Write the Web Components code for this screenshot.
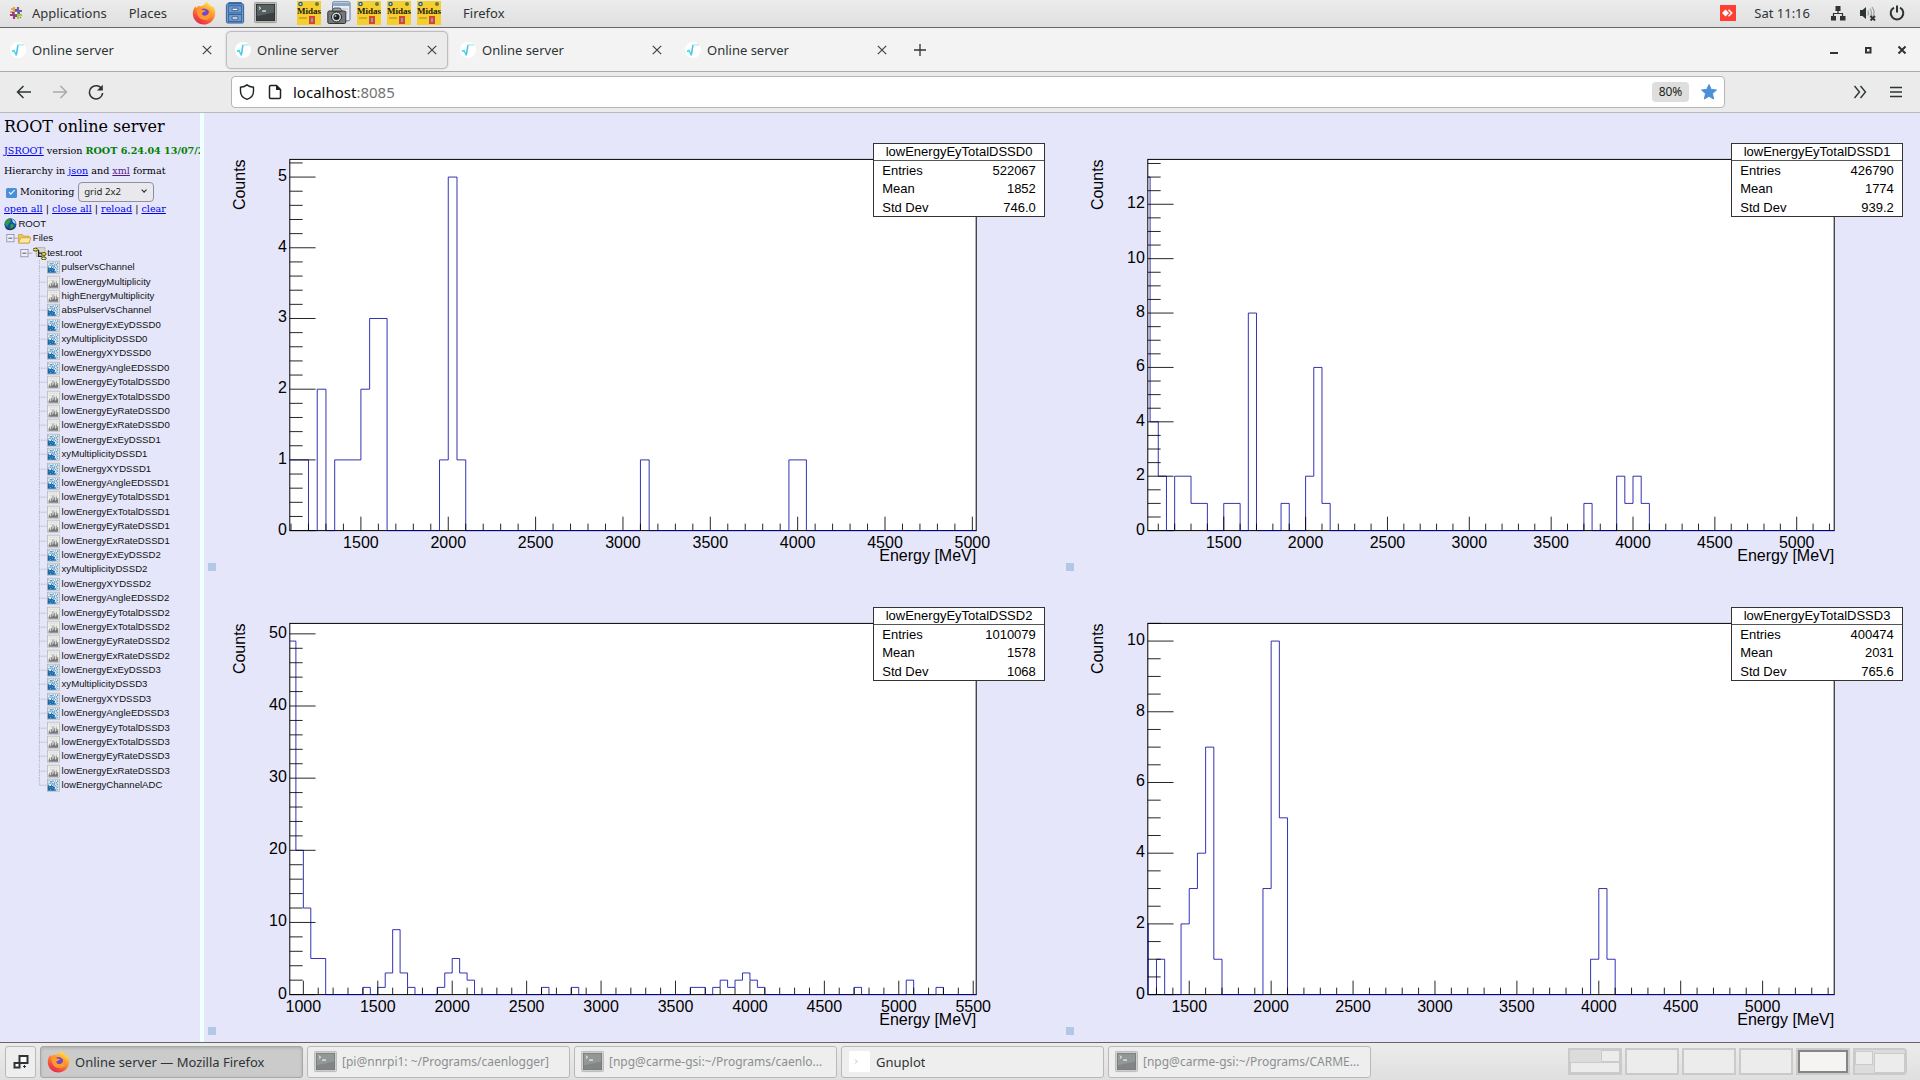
<!DOCTYPE html>
<html lang="en">
<head>
<meta charset="utf-8">
<title>Online server</title>
<style>
html,body{margin:0;height:100%}
body{font-family:"Noto Sans","Open Sans",sans-serif;font-size:13px;color:#2e3436;overflow:hidden}
</style>
</head>
<body>
<desk-top></desk-top>
<script>
const ICONS={
apps:['0 0 14 14','<g stroke-width="2.2" fill="none"><path d="M5 1v5H1" stroke="#e8a33d"/><path d="M9 1v4h4" stroke="#7b5aa6" /><path d="M13 9H9v4" stroke="#9ccd3a"/><path d="M1 9h4v4" stroke="#a8327f"/></g><path d="M7 3v8M3 7h8" stroke="#4b3480" stroke-width="1.6"/><circle cx="7" cy="7" r="1.3" fill="#fff"/><path d="M2.5 3.5 3.5 2.5M11 12l1-1" stroke="#e8542d" stroke-width="1.4"/>'],
firefox:['0 0 24 24','<defs><linearGradient id="f" x1="0.8" y1="0.1" x2="0.3" y2="1"><stop offset="0" stop-color="#ffe14a"/><stop offset=".45" stop-color="#ff8a2b"/><stop offset="1" stop-color="#e8234f"/></linearGradient></defs><path d="M14.5.6c1 2.100 3.900 3.200 5.400 5.400.8 0 .9-.8 1.100-1.100 2 2.700 2.700 6 2 9.300C22 19.700 17.500 23.500 12 23.500 5.800 23.500.8 18.600.8 12.500.8 9.600 2 7 3.400 5.300c.2.800.4 1.400.8 1.800C5.500 5 7.300 4.600 8.800 5.300 11.500 5.300 13 3 14.500.6z" fill="url(#f)"/><circle cx="12" cy="13" r="5.600" fill="#7148c8"/><path d="M4.500 8.500c2.200-1.400 4.600-1 6 .4 1.200.4 2.500.2 3.500.6-1 1.600-3.600 1.500-4.200 3 .3 2 2.600 2.700 4.600 1.800 3-1.300 3-4.600 1.400-6.600 4 1.500 4.700 6.500 1.800 9.500-3 3-8.800 2.300-11-1.200-1.400-2.300-1.900-5-2.100-7.500z" fill="#ff9a2e"/><path d="M4.300 12c.6 5 5.200 7.700 9.500 6.500-4.700 3.300-10.200-.2-9.500-6.500z" fill="#f4375b"/>'],
cabinet:['0 0 20 24','<path d="M2 3 3.500 1h13L18 3v19H2z" fill="#3f70ad"/><rect x="1" y="3" width="18" height="20" rx="1.500" fill="#7fa9d8" stroke="#2f5c96"/><rect x="3" y="5" width="14" height="7.500" fill="#6c9bd0" stroke="#2f5c96"/><rect x="3" y="14" width="14" height="7.500" fill="#6c9bd0" stroke="#2f5c96"/><path d="M7 7.500h6v2.500H7zM7 16.500h6V19H7z" fill="#f4f6fa" stroke="#274b7a" stroke-width=".8"/>'],
term:['0 0 24 24','<rect x=".5" y="1.500" width="23" height="21" rx="1" fill="#c9cbc8" stroke="#9a9c99"/><rect x="2.500" y="3.500" width="19" height="17" fill="#3a4140" stroke="#262b2a"/><path d="M3 4h18v8L3 16z" fill="#566060"/><path d="m5 6 2 1.500L5 9" stroke="#fff" fill="none"/><path d="M8.500 10.500h4" stroke="#fff" stroke-width="1.200"/>'],
camera:['0 0 24 24','<rect x="5.500" y=".8" width="17.500" height="19" rx="1.500" fill="#e9eef4" stroke="#5d7896"/><path d="M5.500 2h17.500v3H5.500z" fill="#8ea9c6"/><path d="M14 8h7M14 11h7" stroke="#b7c4d1"/><rect x=".8" y="10" width="18" height="12.500" rx="1.500" fill="#76797a" stroke="#333"/><path d="M5 10l2-3h6l2 3z" fill="#9da0a1" stroke="#333" stroke-width=".8"/><circle cx="9.500" cy="16" r="5" fill="#d5d7d8" stroke="#222"/><circle cx="9.500" cy="16" r="3" fill="#1b1f24"/><circle cx="8.500" cy="15" r="1" fill="#9bb"/>'],
anydesk:['0 0 16 16','<rect width="16" height="16" fill="#ff3f34"/><path d="M5.500 4.500 9 8l-3.500 3.500L2 8z" fill="#fff"/><path d="m8 5.300 1-1L12.800 8 9 11.700l-1-1L10.700 8z" fill="#fff"/>'],
net:['0 0 16 16','<path d="M5.500 1h5v5h-5zM1 11h5v4.500H1zM10 11h5.500v4.500H10z" fill="#2e3436"/><path d="M8 6v2.500M3.500 11V8.500h9V11" fill="none" stroke="#2e3436" stroke-width="1.200"/>'],
vol:['0 0 17 16','<path d="M1 5h2.500L7 2v12l-3.500-3H1z" fill="#2e3436"/><path d="M8.800 5.500q1.500 2.500 0 5M11 3.500q3 4.500 0 9M13 2q3.500 5 1 9" fill="none" stroke="#a0a3a4" stroke-width="1.300"/><path d="m11.500 11 4.500 4.500M16 11l-4.500 4.500" stroke="#2e3436" stroke-width="1.900"/>'],
power:['0 0 16 16','<path d="M5 2.600a6.300 6.300 0 1 0 6 0" fill="none" stroke="#2e3436" stroke-width="2"/><path d="M8 .5v7" stroke="#2e3436" stroke-width="2"/>'],
fav:['0 0 16 16','<circle cx="8" cy="8" r="8" fill="#fff"/><path d="M2 9.500 4 8.500l2 4" fill="none" stroke="#35dcea" stroke-width="1.500"/><path d="M6 13.500C7.500 10 7 5 8.200 2.800" fill="none" stroke="#4fc4e6" stroke-width="1.600"/><path d="M8 2.900h6" stroke="#a4eaf3" stroke-width="1.200"/>'],
x:['0 0 10 10','<path d="m1.500 1.500 7 7m0-7-7 7" stroke="#3d4345" stroke-width="1"/>'],
plus:['0 0 14 14','<path d="M7 1v12M1 7h12" stroke="#2e3436" stroke-width="1.300"/>'],
min:['0 0 10 10','<path d="M1 8h8" stroke="#2e3436" stroke-width="2"/>'],
max:['0 0 10 10','<rect x="3" y="3" width="4.500" height="4.500" fill="none" stroke="#2e3436" stroke-width="2"/>'],
close:['0 0 10 10','<path d="m1.500 1.500 7 7m0-7-7 7" stroke="#2e3436" stroke-width="2"/>'],
back:['0 0 16 16','<path d="M15 8H1.500M7.500 2l-6 6 6 6" fill="none" stroke="#2e3436" stroke-width="1.500"/>'],
fwd:['0 0 16 16','<path d="M1 8h13.500M8.500 2l6 6-6 6" fill="none" stroke="#a9abab" stroke-width="1.500"/>'],
reload:['0 0 16 16','<path d="M14 5.500A6.600 6.600 0 1 0 14.600 9" fill="none" stroke="#2e3436" stroke-width="1.500"/><path d="M14.800.8v5.700H9z" fill="#2e3436"/>'],
shield:['0 0 16 16','<path d="M8 .9C6.500 2.200 4 3 1.500 3.200v4C1.500 11 4 14 8 15.300c4-1.300 6.500-4.300 6.500-8.100v-4C12 3 9.500 2.200 8 .9z" fill="none" stroke="#1f2324" stroke-width="1.400"/>'],
page:['0 0 16 16','<path d="M9.500 1.500H3.700q-1.200 0-1.200 1.200v10.600q0 1.200 1.200 1.200h8.600q1.200 0 1.200-1.200V5.500z" fill="none" stroke="#1f2324" stroke-width="1.500"/><path d="M9 1v5h5.200z" fill="#1f2324"/>'],
star:['0 0 16 16','<path d="m8 .5 2.200 4.900 5.300.6-4 3.600 1.100 5.400L8 12.300 3.400 15l1.100-5.400-4-3.600 5.300-.6z" fill="#4a90d9" stroke="#4a90d9" stroke-linejoin="round"/>'],
more:['0 0 14 14','<path d="m1.500 1 5 6-5 6M7.500 1l5 6-5 6" fill="none" stroke="#2e3436" stroke-width="1.400"/>'],
menu:['0 0 14 14','<path d="M1 2.500h12M1 7h12M1 11.500h12" stroke="#2e3436" stroke-width="1.300"/>'],
desk:['0 0 16 16','<rect x="6.500" y="2" width="8" height="7" fill="#fff" stroke="#2e3436" stroke-width="2"/><rect x="1.500" y="9" width="5" height="4.500" fill="#fff" stroke="#2e3436" stroke-width="2"/><path d="M10 12.500h3M11.500 11v3" stroke="#2e3436"/>'],
gnuplot:['0 0 24 24','<rect x="1" y="1" width="22" height="22" rx="2" fill="#fff"/><path d="m7 10 3 2-3 2" stroke="#ccc" fill="none"/>'],
globe:['1 0 18 18','<circle cx="9" cy="9" r="7.500" fill="#1c4fa0"/><path d="M2 7C3.500 3 6.500 1.500 9.500 1.500c-1 3 1 3-1 5.500-2 1-2 4-3.500 4.500S2.500 9 2 7zM9.500 9c2-1 4 0 4 2s-2 3.500-3 4.500C8.500 14 8.500 11 9.500 9z" fill="#2f9c4c"/><path d="M11 2.500c3 1 4.500 3.500 4.800 5.500-2 1-4.300-1-4.800-5.500z" fill="#9be0f5"/><path d="M3 14q5 4 11-1" stroke="#123" fill="none"/>'],
folder:['1 0 18 18','<path d="M1.500 15V4.500h5l1.500 2h7V15z" fill="#f2c94f" stroke="#c79a3a"/><path d="M1.500 15 4.500 8.500h12.500L15 15z" fill="#ffe9a0" stroke="#c79a3a"/>'],
rootfile:['1 0 18 18','<path d="M5 2h11v11H5z" fill="#d8d8c8" stroke="#aaa"/><path d="M4 4v2M8 5v8h4M8 9h4" stroke="#222" stroke-width="1.500" fill="none"/><g fill="#f4ec2a" stroke="#222"><ellipse cx="4" cy="4.500" rx="3" ry="1.800"/><ellipse cx="14.500" cy="10" rx="3" ry="1.800"/><ellipse cx="14.500" cy="15.500" rx="3" ry="1.800"/></g>'],
h1:['1 0 18 18','<rect x="1.500" y="1.500" width="15" height="15" fill="#f0f0ee" stroke="#b9b9b9"/><path d="M3 4h12M3 7h12M6 3v8M10 3v8M13 3v8" stroke="#dcdcda"/><path d="M3 16v-3h1v-2h1v3h1v-4h1v3h1v-6h1v5h1v-3h1v4h1v-5h1v4h1v-2h1v6z" fill="#777"/>'],
h2:['1 0 18 18','<rect x="1.500" y="1.500" width="15" height="15" fill="#e2ecf2" stroke="#b0b3b5"/><path d="M2 9h2v1h2V8h1v2h2v1h2v2h-1v1h2v2H2z" fill="#1769aa"/><path d="M3 3h1v1H3zM5 4h2v1H5zM8 3h1v2H8zM11 3h1v1h-1zM14 3h1v2h-1zM4 6h2v1H4zM7 6h1v2H7zM9 7h2v1H9zM12 5h1v2h-1zM13 8h2v1h-2zM11 9h1v1h-1zM13 11h2v1h-2zM14 14h1v1h-1zM12 13h1v1h-1zM9 9h1v1H9zM2 7h1v1H2z" fill="#1769aa"/><path d="M4 11h1v1H4zM7 12h1v1H7zM5 14h1v1H5z" fill="#b9d8ea"/><path d="M6 5h1v1H6zM10 5h1v2h-1zM14 6h1v1h-1zM12 10h1v1h-1zM12 15h1v1h-1zM8 8h1v1H8z" fill="#5fa5d4"/>'],
minus:['0 0 18 18','<path d="M12 9h6" stroke="#9a9aa8"/><rect x="3.500" y="4.500" width="9" height="9" fill="#eef" stroke="#8a8a98"/><path d="M5.500 9h5" stroke="#333"/>'],
mid:['0 0 18 18','<path d="M8 0v18M8 9H18" fill="none" stroke="#9a9aa8" stroke-dasharray="1 1"/>'],
end:['0 0 18 18','<path d="M8 0v9H18" fill="none" stroke="#9a9aa8" stroke-dasharray="1 1"/>'],
blank:['0 0 18 18','']
};
function define(name,html,setup){
  customElements.define(name,class extends HTMLElement{
    connectedCallback(){
      if(this.shadowRoot)return;
      const root=this.attachShadow({mode:'open'});
      root.innerHTML=typeof html==='function'?html(this):html;
      if(setup)setup(this,root);
    }
  });
}
define('sym-icon',el=>{
  const [vb,body]=ICONS[el.getAttribute('name')];
  const w=el.getAttribute('w')||16,h=el.getAttribute('h')||w;
  return `<style>:host{display:block;flex:none}svg{display:block}</style><svg width="${w}" height="${h}" viewBox="${vb}" aria-hidden="true">${body}</svg>`;
});
define('midas-icon',`<style>
:host{display:flex;flex-direction:column;align-items:center;justify-content:space-between;width:24px;height:24px;background:#f5cf2f;box-sizing:border-box;font:bold 9px/8px "Liberation Serif",serif;color:#1d1a10;flex:none;overflow:hidden}
svg{display:block}</style>
<svg width="24" height="6" viewBox="0 0 24 6"><circle cx="3.500" cy="3" r="2.300" fill="#2c5a78"/><circle cx="3.500" cy="3" r="1" fill="#cde"/><circle cx="20" cy="3" r="2" fill="#6d7a3c"/></svg>
<span>Midas</span>
<svg width="24" height="10" viewBox="0 0 24 10"><path d="M2 3h8" stroke="#a08a20" /><rect x="12" y="1" width="6" height="8" fill="#d8452c"/><path d="M14 3h2v4h-2z" fill="#8a9bd0"/></svg>`);

define('top-panel',`<style>
:host{display:flex;align-items:center;height:27px;box-sizing:content-box;background:linear-gradient(#ececec,#dfdfdf);border-bottom:1px solid #666;line-height:20px}
div{display:flex;align-items:center}
.left{flex:1;padding:0 0 2px 9px}
.menu{gap:22px;margin-right:25px}
.apps{gap:9px}
.launch{gap:9px;margin-right:20px}
.midas{gap:6px;margin-right:22px}
.right{gap:13px;padding:0 15px 2px 0}
button{all:unset;display:block}
.clock{margin:0 7px 0 5px}
</style>
<div class="left">
<div class="menu"><div class="apps"><sym-icon name="apps" w="14"></sym-icon><button>Applications</button></div><button>Places</button></div>
<div class="launch"><sym-icon name="firefox" w="24"></sym-icon><sym-icon name="cabinet" w="20" h="23"></sym-icon><sym-icon name="term" w="23"></sym-icon></div>
<div class="midas"><midas-icon></midas-icon><sym-icon name="camera" w="24"></sym-icon><midas-icon></midas-icon><midas-icon></midas-icon><midas-icon></midas-icon></div>
<button>Firefox</button>
</div>
<div class="right"><sym-icon name="anydesk"></sym-icon><span class="clock">Sat 11:16</span><sym-icon name="net"></sym-icon><sym-icon name="vol" w="17" h="16"></sym-icon><sym-icon name="power"></sym-icon></div>`);

define('browser-tab',`<style>
:host{display:flex;align-items:center;gap:6px;width:222px;height:38px;box-sizing:border-box;padding:0 9px 0 8px;border:1px solid transparent;border-radius:5px}
:host([active]){background:#ebebeb;border-color:#bcbcc4;box-shadow:0 0 2px #c0c0cc}
span{flex:1}
button{all:unset}
</style><sym-icon name="fav"></sym-icon><span><slot></slot></span><button aria-label="Close tab"><sym-icon name="x" w="12"></sym-icon></button>`);
define('tab-strip',`<style>
:host{display:flex;align-items:center;gap:3px;height:43px;background:#f3f3f3;border-bottom:1px solid #aaa;padding:0 13px 0 1px}
button{all:unset}
.new{flex:1;display:flex;padding-left:12px}
.win{display:flex;gap:24px}
</style>
<browser-tab>Online server</browser-tab><browser-tab active>Online server</browser-tab><browser-tab>Online server</browser-tab><browser-tab>Online server</browser-tab>
<div class="new"><button aria-label="New tab"><sym-icon name="plus" w="14"></sym-icon></button></div>
<div class="win"><button aria-label="Minimize"><sym-icon name="min" w="10"></sym-icon></button><button aria-label="Restore"><sym-icon name="max" w="10"></sym-icon></button><button aria-label="Close"><sym-icon name="close" w="10"></sym-icon></button></div>`);
define('nav-bar',`<style>
:host{display:flex;align-items:center;height:40px;background:#ebebeb;border-bottom:1px solid #b9b9b9;padding:0 17px 0 16px}
.nav,.end{display:flex;gap:20px}
.nav{width:215px}
.end{gap:22px;margin-left:auto;align-items:center}
button{all:unset}
.url{flex:1;max-width:1494px;margin-right:20px;display:flex;align-items:center;gap:12px;box-sizing:border-box;height:32px;padding:0 7px;background:#fff;border:1px solid #b5b5b5;border-radius:4px}
.addr{flex:1;font-size:15px;line-height:20px;margin-left:-2px;color:#737373}
.addr b{font-weight:400;color:#0c0c0d}
.zoom{background:#dedede;border-radius:4px;font-size:12px;line-height:20px;width:37px;text-align:center;color:#1c1f20}
</style>
<div class="nav"><button aria-label="Back"><sym-icon name="back"></sym-icon></button><button aria-label="Forward"><sym-icon name="fwd"></sym-icon></button><button aria-label="Reload"><sym-icon name="reload"></sym-icon></button></div>
<div class="url"><sym-icon name="shield"></sym-icon><sym-icon name="page"></sym-icon><div class="addr"><b>localhost</b>:8085</div><button class="zoom">80%</button><sym-icon name="star"></sym-icon></div>
<div class="end"><button aria-label="More tools"><sym-icon name="more" w="14"></sym-icon></button><button aria-label="Menu"><sym-icon name="menu" w="14"></sym-icon></button></div>`);

/* One row of the object hierarchy: guide cells, an icon, then a label. */
define('tree-row',el=>`<style>
:host{display:flex;height:18px;line-height:18px;font-size:12px;font-family:"Liberation Sans",sans-serif;color:#111;white-space:nowrap}
</style>${(el.getAttribute('cells')||'').split(' ').filter(Boolean).map(c=>`<sym-icon name="${c}" w="18"></sym-icon>`).join('')}<sym-icon name="${el.getAttribute('icon')}" w="18"></sym-icon><span><slot></slot></span>`);

const items=[['h2','pulserVsChannel'],['h1','lowEnergyMultiplicity'],['h1','highEnergyMultiplicity'],['h2','absPulserVsChannel']];
for(let i=0;i<4;i++){
  for(const n of ['lowEnergyExEy','xyMultiplicity','lowEnergyXY','lowEnergyAngleE'])items.push(['h2',n+'DSSD'+i]);
  for(const n of ['lowEnergyEyTotal','lowEnergyExTotal','lowEnergyEyRate','lowEnergyExRate'])items.push(['h1',n+'DSSD'+i]);
}
items.push(['h2','lowEnergyChannelADC']);

define('root-browser',`<style>
:host{display:block;zoom:.8;width:250px;flex:none;overflow:hidden;background:#e6e6fa;border-right:5px solid #f0ffff;font-family:"DejaVu Serif",serif;font-size:12px;color:#000;white-space:nowrap}
section{padding:2px 0 0 5px}
h1{margin:0;font-size:20px;line-height:30px;font-weight:400}
p{margin:5px 0 0;line-height:20px}
a{color:#0000ee}a.seen{color:#551a8b}
b{color:#008000}
form{display:flex;align-items:center;margin-top:4px;height:25px}
input{appearance:none;width:13px;height:13px;margin:3px 4px 0 3px;border-radius:2px;background:#4a90d9;display:grid;place-items:center}
input::after{content:"";width:6px;height:3px;border:solid #fff;border-width:0 0 2px 2px;rotate:-45deg;margin-bottom:2px}
label{width:73px}
.pick{display:flex;position:relative}
select{appearance:none;width:94px;height:25px;padding:0 6px;border:1px solid #8f8f9d;border-radius:5px;background:#e9e9ed;font:12px "Noto Sans",sans-serif;color:#1c1f20}
.pick::after{content:"";position:absolute;right:9px;top:8px;width:4px;height:4px;border:solid #222;border-width:0 2px 2px 0;rotate:45deg;pointer-events:none}
.ops{margin-top:1px;line-height:16px}
nav{margin-top:2px}
</style>
<section>
<h1>ROOT online server</h1>
<p><a href="#js">JSROOT</a> version <b>ROOT 6.24.04 13/07/2021</b></p>
<p>Hierarchy in <a href="#json">json</a> and <a href="#xml" class="seen">xml</a> format</p>
<form><input type="checkbox" id="mon" checked><label for="mon">Monitoring</label><div class="pick"><select aria-label="Layout"><option>grid 2x2</option></select></div></form>
<p class="ops"><a href="#open">open all</a> | <a href="#close">close all</a> | <a href="#reload">reload</a> | <a href="#clear">clear</a></p>
<nav>
<tree-row icon="globe">ROOT</tree-row>
<tree-row cells="minus" icon="folder">Files</tree-row>
<tree-row cells="blank minus" icon="rootfile">test.root</tree-row>
${items.map(([k,n],i)=>`<tree-row cells="blank blank ${i<items.length-1?'mid':'end'}" icon="${k}">${n}</tree-row>`).join('')}
</nav></section>`);

/* Bins are [from, to, count]; gaps between them are empty. */
const PLOTS=[
{x:[1093,5022],y:5.25,maj:1,min:5,bins:[[1093,1200,1],[1250,1300,2],[1350,1500,1],[1500,1550,2],[1550,1650,3],[1950,2000,1],[2000,2050,5],[2050,2100,1],[3100,3150,1],[3950,4050,1]],st:['522067','1852','746.0']},
{x:[1036,5229],y:13.65,maj:2,min:4,bins:[[1036,1050,13],[1050,1100,4],[1100,1150,2],[1200,1300,2],[1300,1400,1],[1500,1600,1],[1650,1700,8],[1850,1900,1],[2000,2050,2],[2050,2100,6],[2100,2150,1],[3700,3750,1],[3900,3950,2],[3950,4000,1],[4000,4050,2],[4050,4100,1]],st:['426790','1774','939.2']},
{x:[909,5520],y:51.45,maj:10,min:5,bins:[[909,950,49],[950,1000,20],[1000,1050,12],[1050,1150,5],[1400,1450,1],[1500,1550,1],[1550,1600,3],[1600,1650,9],[1650,1700,3],[1700,1750,1],[1900,1950,1],[1950,2000,3],[2000,2050,5],[2050,2100,3],[2100,2150,2],[2600,2650,1],[2800,2850,1],[3600,3700,1],[3750,3800,1],[3800,3850,2],[3850,3900,1],[3900,3950,2],[3950,4000,3],[4000,4050,2],[4050,4100,1],[4700,4750,1],[5050,5100,2],[5250,5300,1]],st:['1010079','1578','1068']},
{x:[1247,5437],y:10.5,maj:2,min:4,bins:[[1247,1250,2],[1300,1350,1],[1450,1500,2],[1500,1550,3],[1550,1600,4],[1600,1650,7],[1650,1700,1],[1950,2000,3],[2000,2050,10],[2050,2100,5],[3950,4000,1],[4000,4050,3],[4050,4100,1]],st:['400474','2031','765.6']}
];
function drawPlot(p,W,H){
  const L=W*.1,R=W*.9,T=H*.1,B=H*.9;
  const X=v=>L+(v-p.x[0])/(p.x[1]-p.x[0])*(R-L),Y=v=>B-v/p.y*(B-T);
  let t='',lab='';
  for(let v=Math.ceil(p.x[0]/100)*100;v<=p.x[1];v+=100){
    const m=v%500===0;
    t+=`M${X(v)} ${B}v${-H*(m?.03:.015)}`;
    if(m)lab+=`<text x="${X(v)}" y="${B+17}" text-anchor="middle">${v}</text>`;
  }
  for(let i=0;i*p.maj/p.min<=p.y;i++){
    const v=i*p.maj/p.min,m=i%p.min===0;
    t+=`M${L} ${Y(v)}h${W*(m?.03:.015)}`;
    if(m)lab+=`<text x="${L-3}" y="${Y(v)+4}" text-anchor="end">${v}</text>`;
  }
  let d=`M${L} ${Y(p.bins[0][2])}`,end=p.x[0];
  for(const [a,b,c] of p.bins){
    if(a>end)d+=`V${B}`;
    d+=`H${X(a)}V${Y(c)}H${X(b)}`;end=b;
  }
  d+=`V${B}H${R}`;
  return `<rect x="${L}" y="${T}" width="${R-L}" height="${B-T}" fill="#fff" stroke="#000"/><path d="${d}" fill="none" stroke="#0000a0" stroke-opacity=".8"/><path d="${t}" stroke="#000" fill="none" stroke-opacity=".85"/>${lab}<text x="${R}" y="${B+30}" text-anchor="end">Energy [MeV]</text><text transform="translate(${L-45} ${T}) rotate(-90)" text-anchor="end">Counts</text>`;
}
define('hist-plot',el=>{
  const i=+el.getAttribute('index'),s=PLOTS[i].st;
  return `<style>
:host{display:block;position:relative;min-width:0;min-height:0;font-family:"Liberation Sans",sans-serif;color:#000}
svg{display:block;position:absolute;inset:0;width:100%;height:100%;font-size:16px;overflow:visible}
table{position:absolute;left:78%;right:2%;top:6.5%;width:20%;height:16%;box-sizing:border-box;border:1px solid #333;background:#fff;border-collapse:separate;border-spacing:0;font-size:13px;line-height:16px}
th,td{padding:1px 8px 0;font-weight:400;text-align:left}
td{text-align:right}
thead th{text-align:center;border-bottom:1px solid #555;padding:0}
i{position:absolute;left:4px;bottom:6px;width:8px;height:8px;background:#b3c7e6}
</style><svg></svg>
<table><thead><tr><th colspan="2">lowEnergyEyTotalDSSD${i}</th></tr></thead><tbody><tr><th>Entries</th><td>${s[0]}</td></tr><tr><th>Mean</th><td>${s[1]}</td></tr><tr><th>Std Dev</th><td>${s[2]}</td></tr></tbody></table><i></i>`;
},(el,root)=>{
  const svg=root.querySelector('svg'),p=PLOTS[+el.getAttribute('index')];
  const draw=()=>{const r=el.getBoundingClientRect();if(r.width)svg.innerHTML=drawPlot(p,r.width,r.height)};
  requestAnimationFrame(draw);
  new ResizeObserver(draw).observe(el);
});
define('plot-grid',`<style>:host{flex:1;display:grid;grid-template:1fr 1fr/1fr 1fr;background:#e6e6fa;min-width:0;padding-bottom:1px}</style>
<hist-plot index="0"></hist-plot><hist-plot index="1"></hist-plot><hist-plot index="2"></hist-plot><hist-plot index="3"></hist-plot>`);

define('task-button',el=>`<style>
:host{display:block;flex:0 1 263px;min-width:0}
button{all:unset;box-sizing:border-box;display:flex;align-items:center;gap:5px;width:100%;height:32px;padding:0 6px;border:1px solid #b9b9b9;border-radius:3px;background:#eee;color:#2e3436}
:host([dim]) button{color:#8b8e8f;font-size:12px}
:host([dim]) sym-icon{opacity:.6}
:host([active]) button{background:#cbcbcb;border-color:#a8a8a8;box-shadow:inset 0 1px 3px #aaa}
span{overflow:hidden;white-space:nowrap;text-overflow:ellipsis}
</style><button><sym-icon name="${el.getAttribute('icon')}" w="23"></sym-icon><span><slot></slot></span></button>`);
define('work-pager',`<style>
:host{display:flex;gap:3px}
div{box-sizing:border-box;width:54px;height:27px;border:2px solid #cacaca;background:#ececec;display:flex}
div:first-child{border-radius:4px 0 0 4px}div:last-child{border-radius:0 4px 4px 0}
.a,.f{background:#dcdcdc}
.cur i{flex:1;border:2px solid #858585;background:#f5f4f2}
.a{flex-wrap:wrap;justify-content:flex-end;align-content:space-between}
i{box-sizing:border-box;background:#ececec;border:1px solid #cacaca}
.a i{width:19px;height:12px}.a i+i{width:50px;height:11px}
.f{gap:1px}.f i{width:18px;height:14px;margin-top:1px}.f i+i{width:31px;height:20px;margin-top:3px}
</style><div class="a"><i></i><i></i></div><div></div><div></div><div></div><div class="cur"><i></i></div><div class="f"><i></i><i></i></div>`);
define('task-bar',`<style>
:host{display:flex;align-items:center;gap:4px;height:37px;background:linear-gradient(#ececec,#dfdfdf);border-top:1px solid #666;padding:0 13px 0 5px}
.show{all:unset;box-sizing:border-box;height:32px;width:31px;flex:none;border:1px solid #b9b9b9;border-radius:3px;background:#eee;display:grid;place-items:center}
work-pager{margin-left:auto}
</style>
<button class="show" aria-label="Show desktop"><sym-icon name="desk"></sym-icon></button>
<task-button icon="firefox" active>Online server — Mozilla Firefox</task-button>
<task-button icon="term" dim>[pi@nnrpi1: ~/Programs/caenlogger]</task-button>
<task-button icon="term" dim>[npg@carme-gsi:~/Programs/caenlo...</task-button>
<task-button icon="gnuplot">Gnuplot</task-button>
<task-button icon="term" dim>[npg@carme-gsi:~/Programs/CARME...</task-button>
<work-pager></work-pager>`);
define('desk-top',`<style>
:host{display:flex;flex-direction:column;height:100vh}
main{flex:1;display:flex;min-height:0}
top-panel,tab-strip,nav-bar,task-bar{flex:none}
</style><top-panel></top-panel><tab-strip></tab-strip><nav-bar></nav-bar><main><root-browser></root-browser><plot-grid></plot-grid></main><task-bar></task-bar>`);
</script>
</body>
</html>
